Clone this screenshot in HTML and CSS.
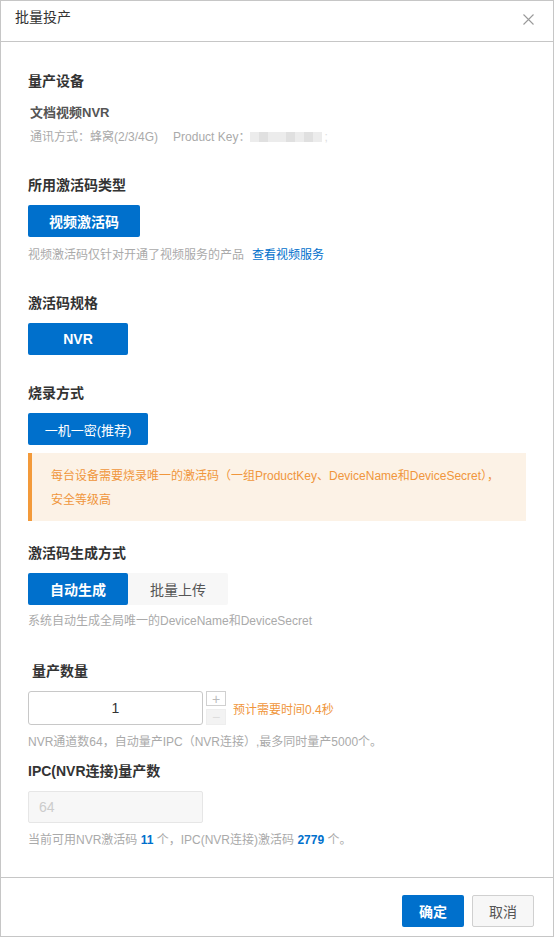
FILE: index.html
```html
<!DOCTYPE html>
<html lang="zh-CN">
<head>
    <meta charset="UTF-8">
    <meta name="viewport" content="width=device-width, initial-scale=1.0">
    <title>批量投产</title>
    <link rel="stylesheet" href="styles.css">
</head>
<body>
    <div class="dialog">
        <div class="dialog-header">
            <span class="dialog-title">批量投产</span>
            <button class="close-btn" aria-label="关闭">
                <svg width="11" height="11" viewBox="0 0 11 11">
                    <path d="M0.5 0.5 L10.5 10.5 M10.5 0.5 L0.5 10.5" stroke="#9a9a9a" stroke-width="1.1" fill="none"/>
                </svg>
            </button>
        </div>

        <div class="dialog-body">
            <!-- 量产设备 -->
            <div class="label first">量产设备</div>
            <div class="device-name">文档视频NVR</div>
            <div class="device-meta">
                <span>通讯方式：蜂窝(2/3/4G)</span>
                <span class="pk">Product Key：<span class="masked"><i></i><i class="d"></i><i></i><i></i><i class="d"></i><i></i><i class="d"></i><i></i></span><span class="tail">;</span></span>
            </div>

            <div class="label">所用激活码类型</div>
            <button class="btn-primary btn-bold w-video">视频激活码</button>
            <div class="hint">视频激活码仅针对开通了视频服务的产品<a href="#" class="link">查看视频服务</a></div>

            <div class="label">激活码规格</div>
            <button class="btn-primary btn-bold w-nvr">NVR</button>

            <div class="label">烧录方式</div>
            <button class="btn-primary w-burn">一机一密(推荐)</button>
            <div class="notice">
                每台设备需要烧录唯一的激活码（一组ProductKey、DeviceName和DeviceSecret），安全等级高
            </div>

            <div class="label mid">激活码生成方式</div>
            <div class="segmented">
                <button class="seg active">自动生成</button>
                <button class="seg">批量上传</button>
            </div>
            <div class="hint tight">系统自动生成全局唯一的DeviceName和DeviceSecret</div>

            <div class="label indent">量产数量</div>
            <div class="number-row">
                <input class="num-input" type="text" value="1">
                <div class="stepper">
                    <button class="step plus">+</button>
                    <button class="step minus" disabled>−</button>
                </div>
                <span class="estimate">预计需要时间0.4秒</span>
            </div>
            <div class="hint small-gap">NVR通道数64，自动量产IPC（NVR连接）,最多同时量产5000个。</div>

            <div class="label near">IPC(NVR连接)量产数</div>
            <input class="num-disabled" type="text" value="64" disabled>
            <div class="hint small-gap">当前可用NVR激活码 <b>11</b> 个，IPC(NVR连接)激活码 <b>2779</b> 个。</div>
        </div>

        <div class="dialog-footer">
            <button class="btn-primary btn-ok">确定</button>
            <button class="btn-cancel">取消</button>
        </div>
    </div>
</body>
</html>
```

FILE: styles.css
```css
/* CSS */
* {
    box-sizing: border-box;
}
body {
    margin: 0;
    font-family: "Liberation Sans", "Noto Sans CJK SC", sans-serif;
    color: #333;
    background: #fff;
}
button {
    font-family: inherit;
    cursor: pointer;
}
.dialog {
    height: 100vh;
    border: 1px solid #c6c6c6;
    display: flex;
    flex-direction: column;
}
.dialog-header {
    height: 41px;
    border-bottom: 1px solid #c6c6c6;
    display: flex;
    justify-content: space-between;
    align-items: flex-start;
    padding: 6px 19px 0 14px;
}
.dialog-title {
    font-size: 14px;
    line-height: 20px;
    color: #333;
}
.close-btn {
    background: none;
    border: none;
    padding: 0;
    margin-top: 7px;
    width: 11px;
    height: 11px;
    display: flex;
}
.dialog-body {
    flex: 1;
    padding: 0 27px;
}
.label {
    font-size: 14px;
    font-weight: bold;
    line-height: 20px;
    color: #333;
    margin-top: 28px;
    margin-bottom: 10px;
}
.label.first {
    margin-top: 29px;
    margin-bottom: 12px;
}
.label.mid {
    margin-top: 22px;
}
.label.indent {
    margin-top: 30px;
    padding-left: 4px;
}
.label.near {
    margin-top: 9px;
}
.device-name {
    font-size: 13px;
    font-weight: bold;
    line-height: 20px;
    color: #555;
    padding-left: 2px;
}
.device-meta {
    font-size: 12px;
    line-height: 20px;
    color: #aaa;
    padding-left: 2px;
    margin-top: 4px;
    display: flex;
    gap: 15px;
}
.pk {
    display: flex;
    align-items: center;
}
.masked {
    display: inline-flex;
}
.masked i {
    width: 9px;
    height: 10px;
    background: #ececec;
}
.masked i.d {
    background: #e0e0e0;
}
.tail {
    color: #ddd;
    margin-left: 2px;
}
.btn-primary {
    display: block;
    height: 32px;
    border: none;
    border-radius: 2px;
    background-color: #0070cc;
    color: #fff;
    font-size: 13px;
    padding: 0;
}
.btn-bold {
    font-size: 14px;
    font-weight: bold;
}
.w-video {
    width: 112px;
}
.w-nvr {
    width: 100px;
}
.w-burn {
    width: 120px;
}
.hint {
    font-size: 12px;
    line-height: 20px;
    color: #aaa;
    margin-top: 8px;
}
.hint.tight {
    margin-top: 6px;
}
.hint.small-gap {
    margin-top: 7px;
}
.hint b {
    color: #0070cc;
}
.link {
    color: #0070cc;
    text-decoration: none;
    margin-left: 8px;
}
.notice {
    margin-top: 8px;
    height: 68px;
    background: #fcf2e6;
    border-left: 4px solid #f39a3a;
    color: #f0963c;
    font-size: 12px;
    line-height: 24px;
    padding: 11px 20px 9px 19px;
}
.segmented {
    display: flex;
    width: 200px;
    height: 32px;
    background: #f7f7f7;
    border-radius: 2px;
}
.seg {
    width: 100px;
    border: none;
    background: transparent;
    font-size: 14px;
    color: #555;
    border-radius: 2px;
    padding: 0;
}
.seg.active {
    background: #0070cc;
    color: #fff;
    font-weight: bold;
}
.number-row {
    display: flex;
    align-items: center;
    height: 34px;
}
.num-input {
    width: 175px;
    height: 34px;
    border: 1px solid #c8c8c8;
    border-radius: 3px;
    text-align: center;
    font-size: 14px;
    font-family: inherit;
    color: #333;
    outline: none;
}
.stepper {
    display: flex;
    flex-direction: column;
    gap: 3px;
    margin-left: 3px;
}
.step {
    width: 20px;
    height: 15px;
    padding: 0;
    border: 1px solid #d0d0d0;
    background: #fff;
    color: #bbb;
    font-size: 14px;
    line-height: 12px;
}
.step.minus {
    height: 16px;
    background: #f3f3f3;
    border-color: #eee;
    color: #ddd;
}
.estimate {
    margin-left: 7px;
    font-size: 12px;
    color: #f0963c;
}
.num-disabled {
    display: block;
    width: 175px;
    height: 32px;
    border: 1px solid #e6e6e6;
    border-radius: 2px;
    background: #f7f7f7;
    color: #ccc;
    font-size: 14px;
    font-family: inherit;
    padding: 0 10px;
}
.dialog-footer {
    height: 59px;
    border-top: 1px solid #c6c6c6;
    display: flex;
    justify-content: flex-end;
    align-items: flex-start;
    gap: 8px;
    padding: 17px 19px 0 0;
}
.btn-ok {
    width: 62px;
    font-size: 14px;
    font-weight: bold;
}
.btn-cancel {
    width: 62px;
    height: 32px;
    border: 1px solid #d0d0d0;
    border-radius: 2px;
    background: #f7f7f7;
    color: #555;
    font-size: 14px;
    padding: 0;
}
```
